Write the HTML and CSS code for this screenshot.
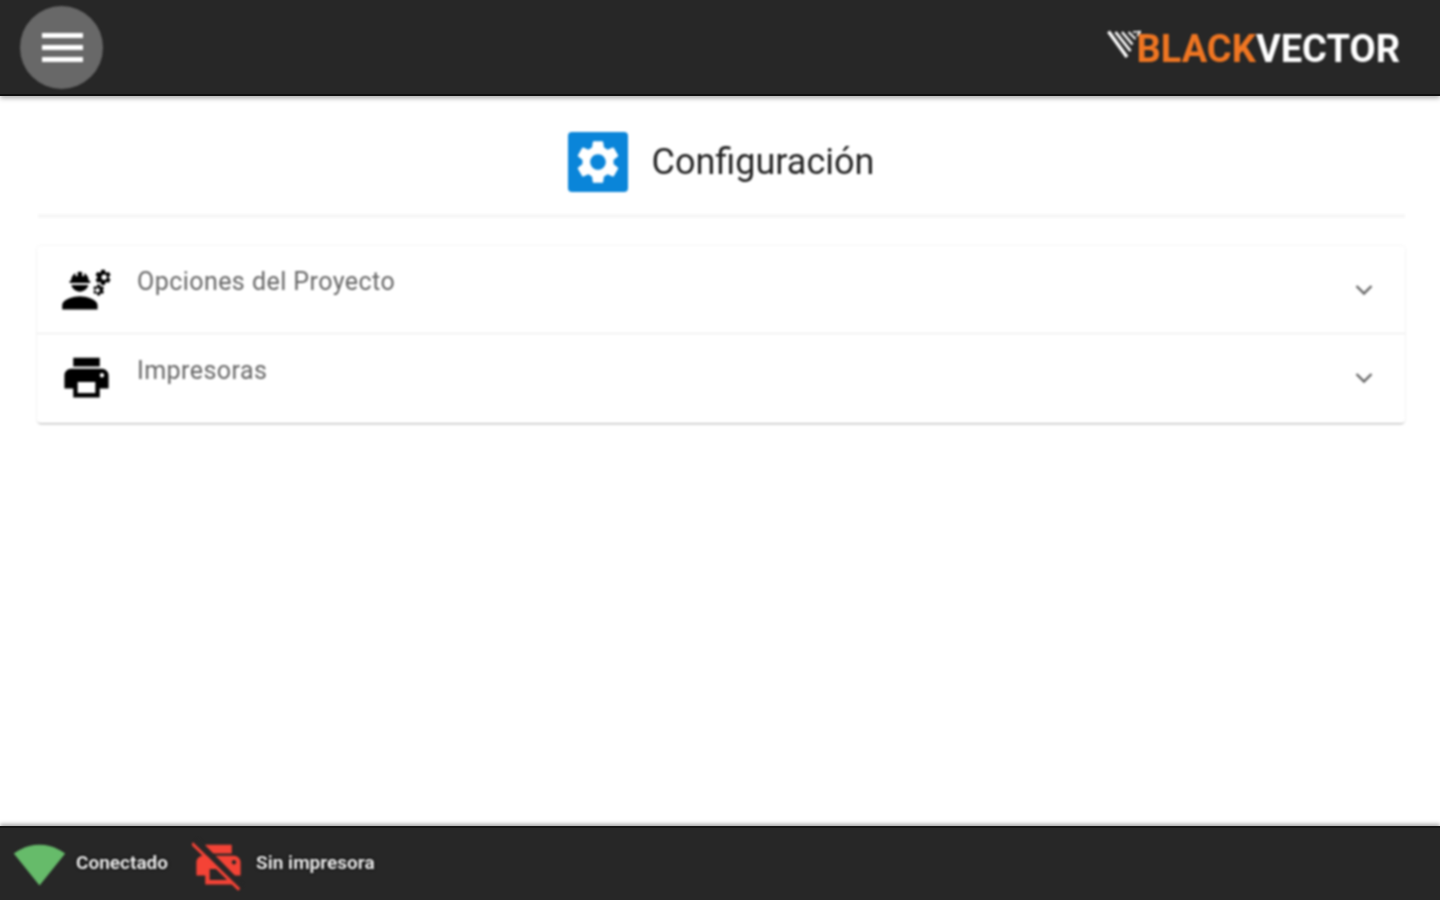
FILE: index.html
```html
<!DOCTYPE html>
<html lang="es">
<head>
<meta charset="utf-8">
<title>Configuración</title>
<link rel="stylesheet" href="styles.css">
</head>
<body>
<div class="app">
  <header class="topbar">
    <button class="menu-btn" aria-label="Menú">
      <span class="menu-line"></span><span class="menu-line"></span><span class="menu-line"></span>
    </button>
    <div class="logo">
      <svg class="logo-mark" viewBox="0 0 34 30" fill="none" stroke="#fff">
        <path d="M1.5 2.5 20 28" stroke-width="3.4"/>
        <path d="M8.5 3 23.5 22" stroke-width="2.8"/>
        <path d="M15 3 25.5 15.5" stroke-width="2.4"/>
        <path d="M21.5 3 28.5 10" stroke-width="2"/>
        <path d="M26 3 33.5 2.5 30 7" stroke-width="1.6"/>
      </svg>
      <span class="logo-black">BLACK</span><span class="logo-vector">VECTOR</span>
    </div>
  </header>

  <main class="content">
    <div class="page-title">
      <span class="title-icon">
        <svg class="gear" viewBox="0 0 24 24"><path fill="#fff" d="M19.14 12.94c.04-.3.06-.61.06-.94 0-.32-.02-.64-.07-.94l2.03-1.58c.18-.14.23-.41.12-.61l-1.92-3.32c-.12-.22-.37-.29-.59-.22l-2.39.96c-.5-.38-1.03-.7-1.62-.94l-.36-2.54c-.04-.24-.24-.41-.48-.41h-3.84c-.24 0-.43.17-.47.41l-.36 2.54c-.59.24-1.13.57-1.62.94l-2.39-.96c-.22-.08-.47 0-.59.22L2.74 8.87c-.12.21-.08.47.12.61l2.03 1.58c-.05.3-.09.63-.09.94s.02.64.07.94l-2.03 1.58c-.18.14-.23.41-.12.61l1.92 3.32c.12.22.37.29.59.22l2.39-.96c.5.38 1.03.7 1.62.94l.36 2.54c.05.24.24.41.48.41h3.84c.24 0 .44-.17.47-.41l.36-2.54c.59-.24 1.13-.56 1.62-.94l2.39.96c.22.08.47 0 .59-.22l1.92-3.32c.12-.22.07-.47-.12-.61l-2.01-1.58zM12 15.6c-1.98 0-3.6-1.62-3.6-3.6s1.62-3.6 3.6-3.6 3.6 1.62 3.6 3.6-1.62 3.6-3.6 3.6z"/></svg>
      </span>
      <h1 class="title-text">Configuración</h1>
    </div>
    <div class="rule"></div>

    <section class="panel">
      <div class="panel-row">
        <svg class="row-icon" viewBox="0 0 24 24"><path d="M9 15c-2.67 0-8 1.34-8 4v2h16v-2c0-2.66-5.33-4-8-4zm13.1-8.16c.01-.11.02-.22.02-.34 0-.12-.01-.23-.03-.34l.74-.58c.07-.05.08-.15.04-.22l-.7-1.21c-.04-.08-.14-.1-.21-.08l-.86.35c-.18-.14-.38-.25-.59-.34l-.13-.93c-.02-.09-.09-.15-.18-.15h-1.4c-.09 0-.16.06-.17.15l-.13.93c-.21.09-.42.21-.59.34l-.87-.35c-.08-.03-.17 0-.21.08l-.7 1.21c-.04.08-.03.17.04.22l.74.58c-.02.11-.03.23-.03.34 0 .11.01.23.03.34l-.74.58c-.07.05-.08.15-.04.22l.7 1.21c.04.08.14.1.21.08l.87-.35c.18.14.38.25.59.34l.13.93c.01.09.08.15.17.15h1.4c.09 0 .16-.06.17-.15l.13-.93c.21-.09.41-.21.59-.34l.87.35c.08.03.17 0 .21-.08l.7-1.21c.04-.08.03-.17-.04-.22l-.73-.58zM20 7.75c-.69 0-1.25-.56-1.25-1.25s.56-1.25 1.25-1.25 1.25.56 1.25 1.25-.56 1.25-1.25 1.25zm-.09 3.68-.5-.87c-.03-.06-.1-.08-.15-.06l-.62.25c-.13-.1-.27-.18-.42-.24l-.09-.66c-.01-.06-.06-.1-.12-.1h-1c-.06 0-.11.04-.12.11l-.09.66c-.15.06-.29.15-.42.24l-.62-.25c-.06-.02-.12 0-.15.06l-.5.87c-.03.06-.02.12.03.16l.53.41c-.01.08-.02.16-.02.24 0 .08.01.17.02.24l-.53.41c-.05.04-.06.11-.03.16l.5.87c.03.06.1.08.15.06l.62-.25c.13.1.27.18.42.24l.09.66c.01.07.06.11.12.11h1c.06 0 .11-.04.12-.11l.09-.66c.15-.06.29-.15.42-.24l.62.25c.06.02.12 0 .15-.06l.5-.87c.03-.06.02-.12-.03-.16l-.52-.41c.01-.08.02-.16.02-.24 0-.08-.01-.17-.02-.24l.53-.41c.05-.04.06-.11.03-.17zm-2.91 1.9c-.55 0-1-.45-1-1s.45-1 1-1 1 .45 1 1-.45 1-1 1zM4.74 9h8.53c.27 0 .49-.2.49-.46v-.08c0-.26-.22-.46-.49-.46H13c0-1.48-.81-2.75-2-3.45v.95c0 .28-.22.5-.5.5s-.5-.22-.5-.5V4.14C9.68 4.06 9.35 4 9 4s-.68.06-1 .14V5.5c0 .28-.22.5-.5.5S7 5.78 7 5.5v-.95C5.81 5.25 5 6.52 5 8h-.26c-.27 0-.49.2-.49.46v.08c0 .26.22.46.49.46zM9 13c1.86 0 3.41-1.28 3.86-3H5.14c.45 1.72 2 3 3.86 3z"/></svg>
        <span class="row-label">Opciones del Proyecto</span>
        <svg class="chevron" viewBox="0 0 18 12"><path d="M1.5 2 9 9.5 16.5 2" fill="none" stroke="#666" stroke-width="2.4"/></svg>
      </div>
      <div class="panel-row">
        <svg class="row-icon" viewBox="0 0 24 24"><path d="M19 8H5c-1.66 0-3 1.34-3 3v6h4v4h12v-4h4v-6c0-1.66-1.34-3-3-3zm-3 11H8v-5h8v5zm3-7c-.55 0-1-.45-1-1s.45-1 1-1 1 .45 1 1-.45 1-1 1zm-1-9H6v4h12V3z"/></svg>
        <span class="row-label">Impresoras</span>
        <svg class="chevron" viewBox="0 0 18 12"><path d="M1.5 2 9 9.5 16.5 2" fill="none" stroke="#666" stroke-width="2.4"/></svg>
      </div>
    </section>
  </main>

  <footer class="statusbar">
    <div class="status status-wifi">
      <svg class="status-icon" viewBox="0 0 24 24"><path fill="#66bb6a" d="M12.01 21.49L23.64 7c-.45-.34-4.93-4-11.64-4C5.28 3 .81 6.66.36 7l11.64 14.5.01-.01z"/></svg>
      <span class="status-text">Conectado</span>
    </div>
    <div class="status status-printer">
      <svg class="status-icon" viewBox="0 0 24 24">
        <path fill="#f44336" d="M19 8H5c-1.66 0-3 1.34-3 3v6h4v4h12v-4h4v-6c0-1.66-1.34-3-3-3zm-3 11H8v-5h8v5zm3-7c-.55 0-1-.45-1-1s.45-1 1-1 1 .45 1 1-.45 1-1 1zm-1-9H6v4h12V3z"/>
        <path d="M1.2 1.4 22 22.6" stroke="#272727" stroke-width="2.8" transform="translate(.5 -.5)"/>
        <path d="M0 2.4 21.4 23.4" stroke="#f44336" stroke-width="1.4"/>
      </svg>
      <span class="status-text">Sin impresora</span>
    </div>
  </footer>
</div>
</body>
</html>
```
FILE: styles.css
```css
* { box-sizing: border-box; }
html, body { margin: 0; height: 100%; overflow: hidden; }
body { background: #fff; font-family: Roboto, "Liberation Sans", sans-serif; }

.app {
  height: 900px;
  display: flex;
  flex-direction: column;
  background: #fff;
}

.menu-btn, .logo, .page-title, .rule, .panel, .status { filter: blur(0.8px); }

.topbar {
  height: 96px;
  flex: none;
  display: flex;
  align-items: center;
  justify-content: space-between;
  padding: 0 40px 0 20px;
  background: #272727;
  border-bottom: 2px solid #111;
  box-shadow: 0 2px 5px rgba(0, 0, 0, .35);
  position: relative;
  z-index: 1;
}
.menu-btn {
  width: 83px;
  height: 83px;
  padding: 0 0 0 2px;
  border: 0;
  border-radius: 50%;
  background: #686868;
  display: flex;
  flex-direction: column;
  align-items: center;
  justify-content: center;
  gap: 7px;
}
.menu-line { width: 41px; height: 5px; background: #fff; }

.logo {
  display: flex;
  align-items: center;
  margin-top: 4px;
  font-family: Roboto, Lato, sans-serif;
  font-weight: 700;
  font-size: 38px;
  line-height: 1;
}
.logo-mark { width: 34px; height: 30px; margin: 0 -4px 10px 0; }
.logo-black { color: #f07622; }
.logo-vector { color: #fff; }

.content { flex: 1; padding: 0 35px 0 37px; }
.page-title {
  display: flex;
  align-items: center;
  justify-content: center;
  gap: 24px;
  margin-top: 36px;
  height: 60px;
}
.title-icon {
  width: 60px;
  height: 60px;
  border-radius: 4px;
  background: #0a85d9;
  display: flex;
  align-items: center;
  justify-content: center;
}
.gear { width: 52px; height: 52px; }
.title-text { margin: 0; font-size: 36px; font-weight: 400; color: #222; }
.rule { height: 4px; margin: 22px 0 0 1px; background: #f7f7f7; }

.panel {
  margin-top: 28px;
  border-radius: 4px;
  background: #fff;
  box-shadow: 0 2px 2px -1px rgba(0, 0, 0, .3), 0 0 3px rgba(0, 0, 0, .08);
}
.panel-row {
  height: 87px;
  display: flex;
  align-items: center;
  padding: 0 30px 0 23px;
}
.panel-row + .panel-row {
  height: 90px;
  padding-bottom: 2px;
  border-top: 1px solid #e9e9e9;
}
.row-icon { width: 53px; height: 53px; flex: none; }
.row-label {
  margin: 0 0 16px 24px;
  flex: 1;
  font-size: 25px;
  letter-spacing: .45px;
  color: #666;
}
.panel-row + .panel-row .row-label { margin-bottom: 15px; }
.chevron { width: 18px; height: 12px; flex: none; margin-right: 2px; }

.statusbar {
  height: 74px;
  flex: none;
  display: flex;
  align-items: center;
  padding-left: 13px;
  background: #272727;
  border-top: 2px solid #161616;
  box-shadow: 0 -2px 4px rgba(0, 0, 0, .35);
}
.status { display: flex; align-items: center; }
.status-wifi { margin-right: 24px; }
.status-icon { width: 53px; height: 53px; flex: none; }
.status-wifi .status-icon { margin-right: 10px; }
.status-printer .status-icon { margin-right: 11px; }
.status-text {
  margin-bottom: 4px;
  font-size: 19px;
  font-weight: 700;
  color: #eee;
  text-shadow: 0 0 2px #000, 0 0 2px #000, 0 0 3px #000;
}
```
